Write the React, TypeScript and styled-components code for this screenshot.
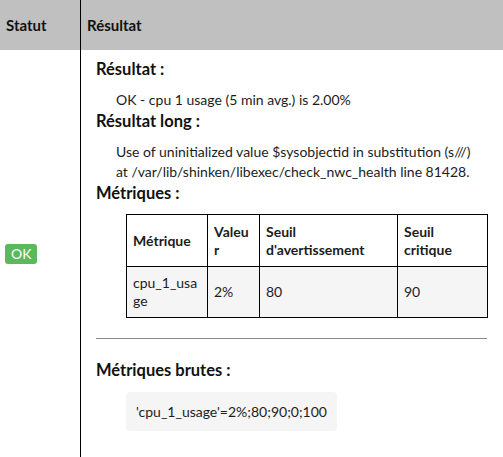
import React from "react";
import styled, { createGlobalStyle } from "styled-components";

const Global = createGlobalStyle`
  html, body { margin: 0; padding: 0; background: #fff; }
  body { font-family: Lato, "Noto Sans", sans-serif; color: #1c1c1c; }
  * { box-sizing: border-box; }
`;

const Grid = styled.div`
  display: grid;
  grid-template-columns: 81px 1fr;
  grid-template-rows: 50px 1fr;
  min-height: 100vh;
`;

const HeadCell = styled.div<{ $first?: boolean }>`
  background: #c0c0c0;
  display: flex;
  align-items: center;
  font-size: 15px;
  font-weight: 700;
  color: #111;
  padding-left: 6px;
  border-right: ${(p) => (p.$first ? "1px solid #000" : "none")};
`;

const StatusCell = styled.div`
  border-right: 1px solid #000;
  display: flex;
  align-items: center;
  padding-left: 5px;
`;

const Badge = styled.span`
  display: inline-flex;
  align-items: center;
  justify-content: center;
  height: 20px;
  padding: 0 6px;
  background: #5cb85c;
  color: #fff;
  border-radius: 3px;
  font-size: 14px;
  line-height: 1;
`;

const Content = styled.div`
  padding: 9px 16px 26px 15px;
  min-width: 0;
`;

const Title = styled.h4<{ $gap?: number }>`
  margin: ${(p) => p.$gap ?? 0}px 0 0 0;
  font-size: 16.5px;
  line-height: 21px;
  font-weight: 700;
  color: #111;
`;

const Body = styled.p`
  margin: 10px 0 1px 20px;
  font-size: 14px;
  line-height: 20px;
`;

const Table = styled.table`
  margin: 10px 0 0 30px;
  width: calc(100% - 30px);
  border-collapse: collapse;
  table-layout: fixed;
  font-size: 14px;
  line-height: 18px;
`;

const Th = styled.th`
  border: 1px solid #000;
  padding: 8px 6px 7px;
  text-align: left;
  font-weight: 700;
  vertical-align: middle;
  overflow-wrap: anywhere;
`;

const Td = styled.td`
  border: 1px solid #000;
  padding: 7px 4px 7px 6px;
  background: #f5f5f5;
  vertical-align: middle;
  line-break: anywhere;
  overflow-wrap: anywhere;
`;

const Rule = styled.hr`
  margin: 20px 0 0 0;
  border: none;
  border-top: 1px solid #8c8c8c;
  height: 0;
`;

const Code = styled.div`
  margin: 11px 0 0 30px;
  display: inline-block;
  background: #f5f5f5;
  border-radius: 4px;
  padding: 10px 10px 9px 10px;
  font-size: 14px;
  line-height: 20px;
`;

export default function App() {
  return (
    <>
      <Global />
      <Grid>
        <HeadCell $first>Statut</HeadCell>
        <HeadCell>Résultat</HeadCell>
        <StatusCell>
          <Badge>OK</Badge>
        </StatusCell>
        <Content>
          <Title>Résultat :</Title>
          <Body>OK - cpu 1 usage (5 min avg.) is 2.00%</Body>
          <Title>Résultat long :</Title>
          <Body>
            Use of uninitialized value $sysobjectid in substitution (s///)
            <br />
            at /var/lib/shinken/libexec/check_nwc_health line 81428.
          </Body>
          <Title>Métriques :</Title>
          <Table>
            <colgroup>
              <col style={{ width: 81 }} />
              <col style={{ width: 52 }} />
              <col style={{ width: 138 }} />
              <col style={{ width: 90 }} />
            </colgroup>
            <thead>
              <tr>
                <Th>Métrique</Th>
                <Th>Valeur</Th>
                <Th>Seuil d'avertissement</Th>
                <Th>Seuil critique</Th>
              </tr>
            </thead>
            <tbody>
              <tr>
                <Td>cpu_1_usage</Td>
                <Td>2%</Td>
                <Td>80</Td>
                <Td>90</Td>
              </tr>
            </tbody>
          </Table>
          <Rule />
          <Title $gap={21}>Métriques brutes :</Title>
          <Code>'cpu_1_usage'=2%;80;90;0;100</Code>
        </Content>
      </Grid>
    </>
  );
}
